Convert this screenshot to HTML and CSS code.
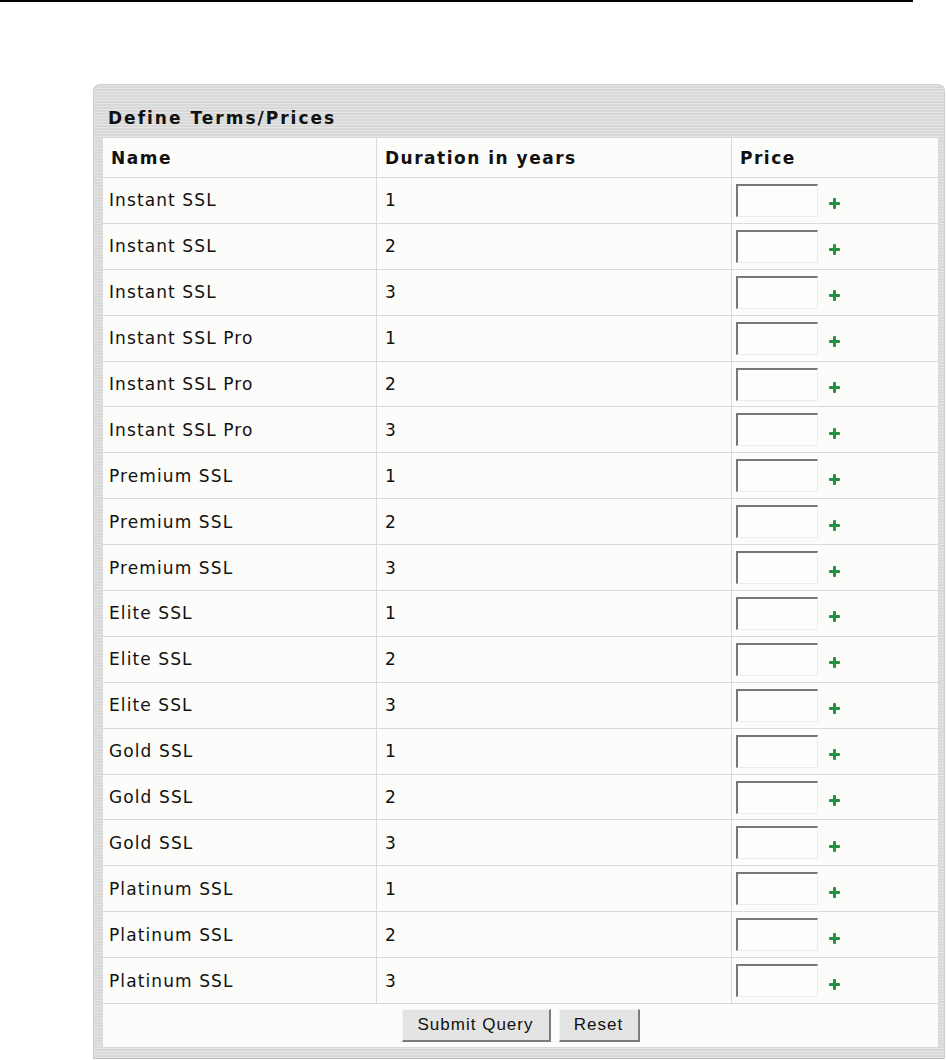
FILE: index.html
```html
<!DOCTYPE html>
<html>
<head>
<meta charset="utf-8">
<title>Define Terms/Prices</title>
<link rel="stylesheet" href="styles.css">
</head>
<body>
<div class="topline"></div>
<form class="panel">
  <div class="panel-title">Define Terms/Prices</div>
  <table class="grid">
    <colgroup><col class="c1"><col class="c2"><col class="c3"></colgroup>
    <tr class="head"><th>Name</th><th>Duration in years</th><th>Price</th></tr>
    <tr><td>Instant SSL</td><td>1</td><td><div class="price"><input type="text"><span class="plus"></span></div></td></tr>
    <tr><td>Instant SSL</td><td>2</td><td><div class="price"><input type="text"><span class="plus"></span></div></td></tr>
    <tr><td>Instant SSL</td><td>3</td><td><div class="price"><input type="text"><span class="plus"></span></div></td></tr>
    <tr><td>Instant SSL Pro</td><td>1</td><td><div class="price"><input type="text"><span class="plus"></span></div></td></tr>
    <tr><td>Instant SSL Pro</td><td>2</td><td><div class="price"><input type="text"><span class="plus"></span></div></td></tr>
    <tr><td>Instant SSL Pro</td><td>3</td><td><div class="price"><input type="text"><span class="plus"></span></div></td></tr>
    <tr><td>Premium SSL</td><td>1</td><td><div class="price"><input type="text"><span class="plus"></span></div></td></tr>
    <tr><td>Premium SSL</td><td>2</td><td><div class="price"><input type="text"><span class="plus"></span></div></td></tr>
    <tr><td>Premium SSL</td><td>3</td><td><div class="price"><input type="text"><span class="plus"></span></div></td></tr>
    <tr><td>Elite SSL</td><td>1</td><td><div class="price"><input type="text"><span class="plus"></span></div></td></tr>
    <tr><td>Elite SSL</td><td>2</td><td><div class="price"><input type="text"><span class="plus"></span></div></td></tr>
    <tr><td>Elite SSL</td><td>3</td><td><div class="price"><input type="text"><span class="plus"></span></div></td></tr>
    <tr><td>Gold SSL</td><td>1</td><td><div class="price"><input type="text"><span class="plus"></span></div></td></tr>
    <tr><td>Gold SSL</td><td>2</td><td><div class="price"><input type="text"><span class="plus"></span></div></td></tr>
    <tr><td>Gold SSL</td><td>3</td><td><div class="price"><input type="text"><span class="plus"></span></div></td></tr>
    <tr><td>Platinum SSL</td><td>1</td><td><div class="price"><input type="text"><span class="plus"></span></div></td></tr>
    <tr><td>Platinum SSL</td><td>2</td><td><div class="price"><input type="text"><span class="plus"></span></div></td></tr>
    <tr><td>Platinum SSL</td><td>3</td><td><div class="price"><input type="text"><span class="plus"></span></div></td></tr>
    <tr class="actions"><td colspan="3"><button type="submit" class="btn btn-submit">Submit Query</button><button type="reset" class="btn btn-reset">Reset</button></td></tr>
  </table>
</form>
</body>
</html>
```
FILE: styles.css
```css
html, body {
  margin: 0;
  padding: 0;
  background: #ffffff;
}

body {
  font-family: "DejaVu Sans", Verdana, sans-serif;
  color: #000;
}

.topline {
  width: 913px;
  height: 2px;
  background: #000;
}

.panel {
  display: block;
  width: 836px;
  margin: 82px 0 0 93px;
  padding: 0 6px 10px 8px;
  background-color: #dcdcdc;
  background-image: repeating-linear-gradient(180deg, rgba(255,255,255,0.25) 0px, rgba(255,255,255,0.25) 1px, rgba(0,0,0,0.02) 1px, rgba(0,0,0,0.02) 3px);
  border: 1px solid #cfcfcf;
  border-bottom-color: #b8b8b8;
  border-radius: 7px 7px 0 0;
}

.panel-title {
  height: 29px;
  padding: 23px 0 0 6px;
  font-size: 17px;
  line-height: 20px;
  font-weight: bold;
  letter-spacing: 2px;
  color: #111;
}

.grid {
  width: 836px;
  border-collapse: collapse;
  background: #fcfcfa;
  border: 1px solid #c2c2c2;
  table-layout: fixed;
}

.c1 { width: 274px; }
.c2 { width: 355px; }
.c3 { width: 207px; }

.grid th,
.grid td {
  border: 1px solid #dadada;
  padding: 0 0 0 6px;
  text-align: left;
  font-size: 17px;
  letter-spacing: 1.1px;
  white-space: nowrap;
  color: #111;
}

.grid th {
  height: 39px;
  font-weight: bold;
  letter-spacing: 1.5px;
  padding-left: 8px;
}

.grid td {
  height: 44.9px;
}

.grid td:nth-child(2),
.grid th:nth-child(2) {
  padding-left: 8px;
}

.grid td:nth-child(3) {
  padding-left: 4px;
}

.price {
  display: flex;
  align-items: center;
}

.price input {
  box-sizing: border-box;
  width: 82px;
  height: 33px;
  margin: 0;
  padding: 0;
  background: #fdfdfd;
  border-style: solid;
  border-width: 2px 1px 1px 2px;
  border-color: #777 #ececec #ececec #777;
  outline: none;
}

.plus {
  position: relative;
  width: 11px;
  height: 11px;
  margin: 7px 0 0 11px;
}

.plus::before,
.plus::after {
  content: "";
  position: absolute;
  background: #22923f;
  border-radius: 1px;
}

.plus::before {
  left: 0;
  top: 4px;
  width: 11px;
  height: 3px;
}

.plus::after {
  left: 4px;
  top: 0;
  width: 3px;
  height: 11px;
}

.grid tr.actions td {
  height: 43px;
  padding: 0;
  text-align: center;
}

.btn {
  box-sizing: border-box;
  height: 33px;
  margin: 0 4px;
  padding: 0 6px;
  font-family: "Liberation Sans", Arial, sans-serif;
  font-size: 17px;
  letter-spacing: 1px;
  color: #111;
  background: #e4e4e4;
  border-style: solid;
  border-width: 1px 2px 2px 1px;
  border-color: #f4f4f4 #7c7c7c #7c7c7c #f4f4f4;
  vertical-align: middle;
}

.btn-submit { width: 149px; }
.btn-reset { width: 81px; }
```
